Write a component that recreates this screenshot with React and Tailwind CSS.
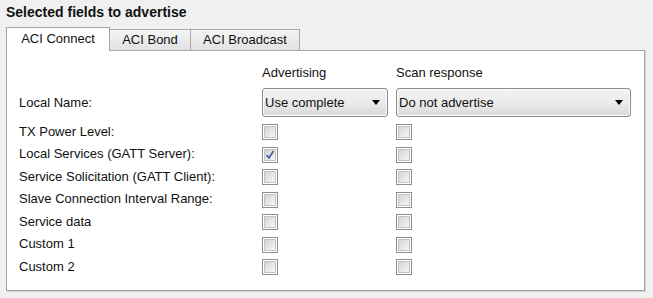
import React from 'react';

const rows = [
  { label: 'TX Power Level:', adv: false, scan: false },
  { label: 'Local Services (GATT Server):', adv: true, scan: false },
  { label: 'Service Solicitation (GATT Client):', adv: false, scan: false },
  { label: 'Slave Connection Interval Range:', adv: false, scan: false },
  { label: 'Service data', adv: false, scan: false },
  { label: 'Custom 1', adv: false, scan: false },
  { label: 'Custom 2', adv: false, scan: false },
];

const Checkbox = ({ checked }) => (
  <div className="w-[16px] h-[16px] border border-[#8f8f8f] bg-white p-px">
    <div className="w-full h-full border border-[#c4c4c4] bg-gradient-to-br from-[#d4d4d4] to-[#f7f7f7] flex items-center justify-center">
      {checked && (
        <svg width="10" height="10" viewBox="0 0 10 10">
          <path d="M1.5 5 L4 8 L8.5 1" fill="none" stroke="#3d57a8" strokeWidth="1.6" />
        </svg>
      )}
    </div>
  </div>
);

const Select = ({ value, width }) => (
  <div
    className={`${width} h-[29px] rounded-[3px] border border-[#8c8c8c] bg-gradient-to-b from-[#f3f3f3] via-[#ebebeb] to-[#d9d9d9] flex items-center justify-between pl-[2px] pr-[7px] shadow-[inset_0_0_0_1px_#fafafa]`}
  >
    <span>{value}</span>
    <svg width="8" height="5" viewBox="0 0 8 5">
      <path d="M0 0 H8 L4 5 Z" fill="#000" />
    </svg>
  </div>
);

const App = () => {
  return (
    <div className="w-[653px] h-[298px] bg-[#f0f0f0] font-['Liberation_Sans',Arial,sans-serif] text-[13px] text-[#111] pl-[6px] overflow-hidden">
      {/* Title */}
      <div className="h-[27px] pt-[4px] font-bold text-[14px] leading-[16px]">Selected fields to advertise</div>

      {/* Tabs */}
      <div className="flex items-end h-[24px] -mb-px">
        <div className="relative z-10 w-[104px] h-[24px] bg-white border-l border-t border-r border-[#a3a3a3] flex items-center justify-center pb-px">
          ACI Connect
        </div>
        <div className="-ml-px w-[82px] h-[22px] bg-gradient-to-b from-[#f4f4f4] to-[#e2e2e2] border border-[#a8a8a8] flex items-center justify-center">
          ACI Bond
        </div>
        <div className="-ml-px w-[110px] h-[22px] bg-gradient-to-b from-[#f4f4f4] to-[#e2e2e2] border border-[#a8a8a8] flex items-center justify-center">
          ACI Broadcast
        </div>
      </div>

      {/* Panel */}
      <div className="w-[639px] h-[241px] bg-white border border-[#a3a3a3] shadow-[1px_1px_0_#d4d4d4] pl-[12px] pt-[13px]">
        <div className="grid grid-cols-[243px_134px_235px]">
          <div className="h-[18px]" />
          <div className="h-[18px] flex items-center">Advertising</div>
          <div className="h-[18px] flex items-center">Scan response</div>

          <div className="mt-[6px] h-[29px] flex items-center">Local Name:</div>
          <div className="mt-[6px]">
            <Select value="Use complete" width="w-[126px]" />
          </div>
          <div className="mt-[6px]">
            <Select value="Do not advertise" width="w-[235px]" />
          </div>
        </div>

        <div className="mt-[4px]">
          {rows.map((row) => (
            <div key={row.label} className="grid grid-cols-[243px_134px_235px] h-[22.5px] items-center">
              <div className="-mt-[2px]">{row.label}</div>
              <Checkbox checked={row.adv} />
              <Checkbox checked={row.scan} />
            </div>
          ))}
        </div>
      </div>
    </div>
  );
};

export default App;
